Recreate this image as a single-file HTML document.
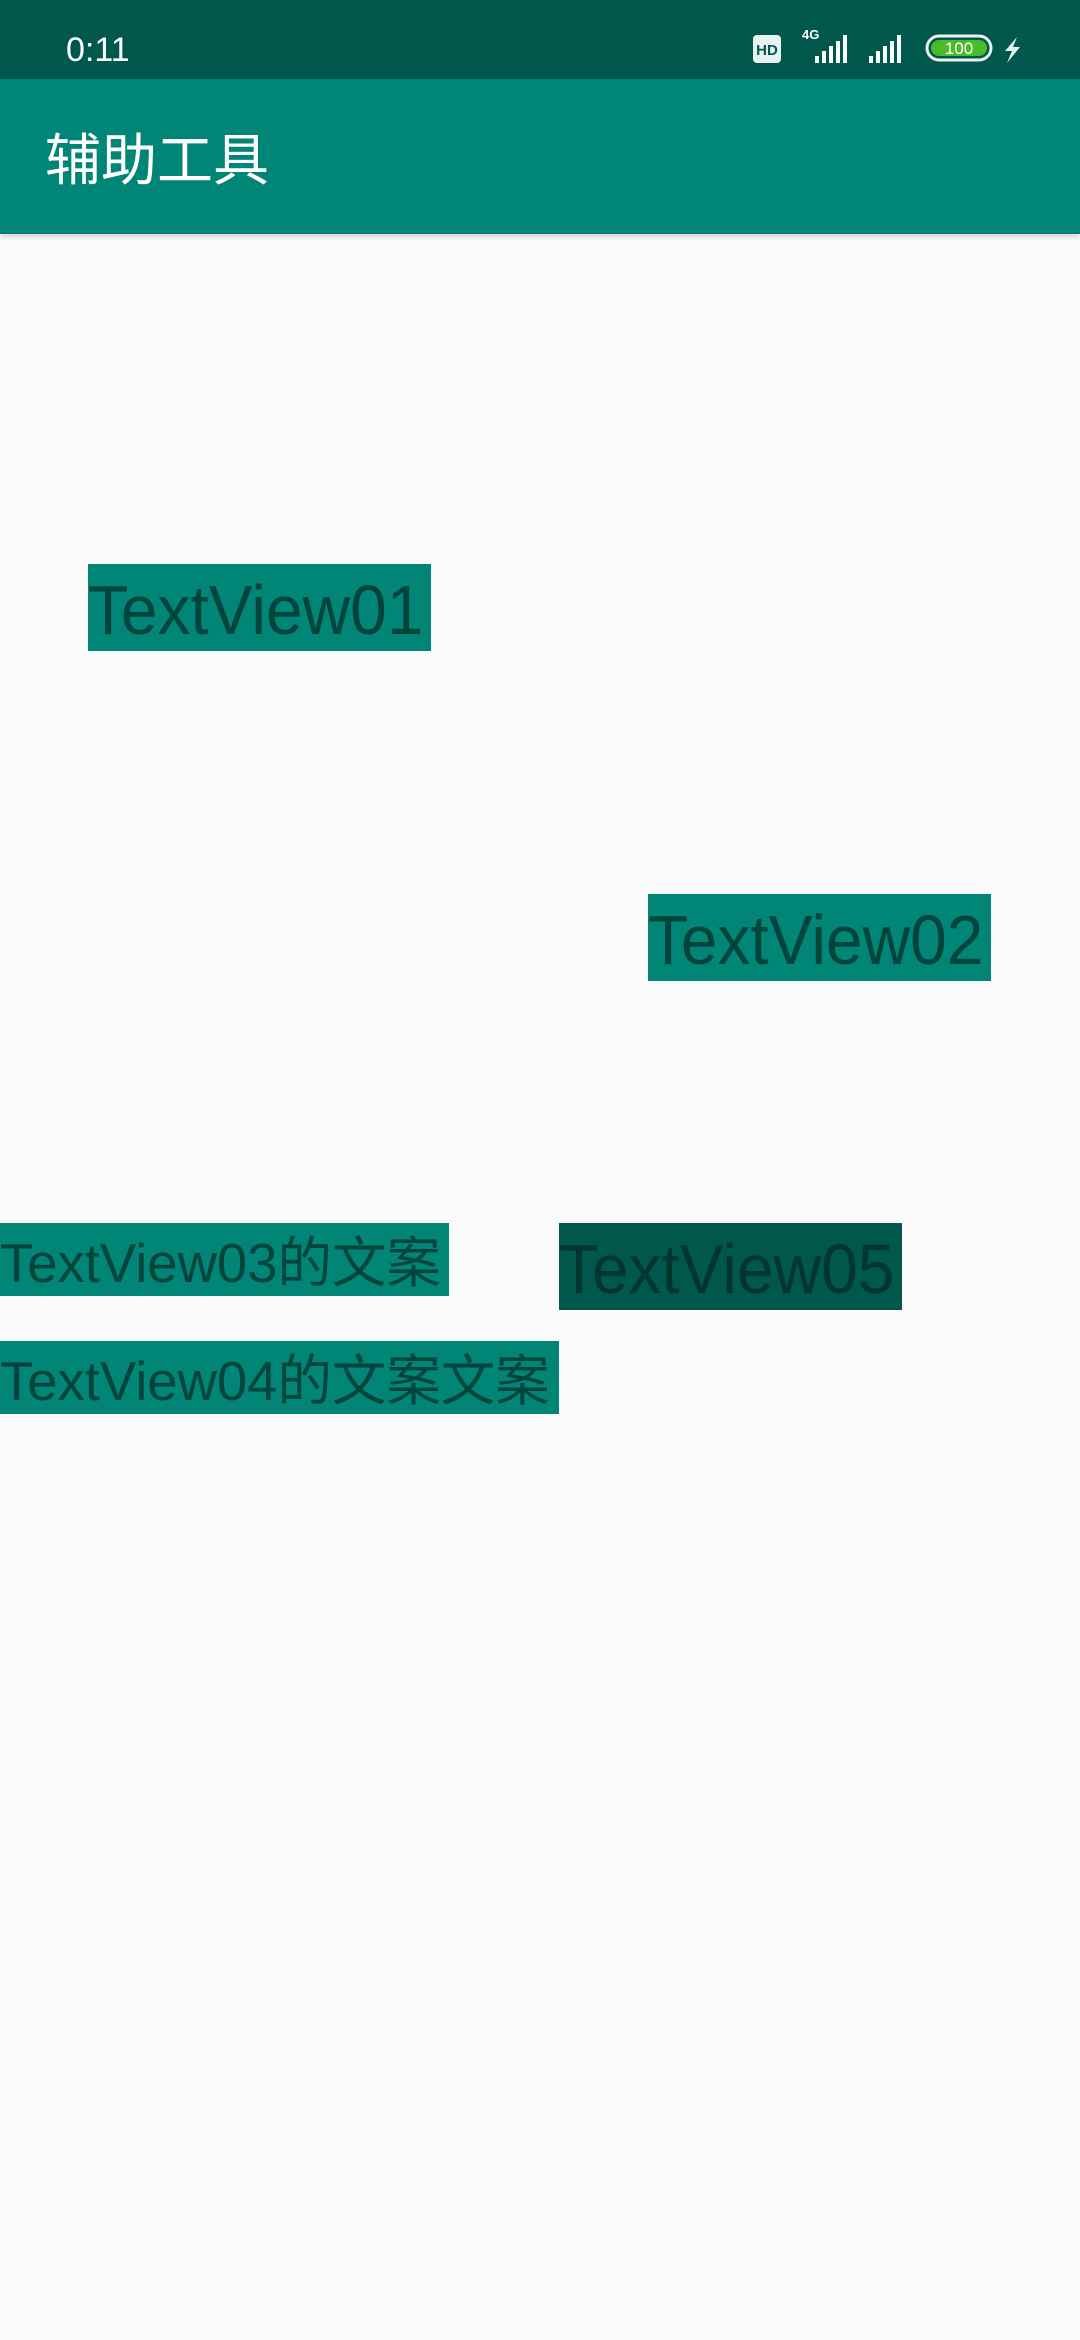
<!DOCTYPE html>
<html><head><meta charset="utf-8"><style>
*{margin:0;padding:0;box-sizing:border-box}
body{width:1080px;height:2340px;background:#fafafa;position:relative;overflow:hidden;font-family:"Liberation Sans","Noto Sans CJK SC",sans-serif}
.sb{position:absolute;left:0;top:0;width:1080px;height:79px;background:#00574b}
.tb{position:absolute;left:0;top:79px;width:1080px;height:155px;background:#008577;box-shadow:0 3px 5px rgba(0,0,0,.15)}
.box{position:absolute;background:#008577;color:#00453b;white-space:nowrap;overflow:hidden}
.box span{display:inline-block;transform-origin:0 0}
</style></head><body>
<div class="sb">
<div style="position:absolute;left:66px;top:31px;color:#fff;font-size:34px;">0:11</div>
<svg style="position:absolute;left:740px;top:20px" width="340" height="60" viewBox="0 0 340 60">
<rect x="13" y="15" width="28" height="28" rx="4" fill="#e8f2f0"/>
<text x="27" y="35" font-size="15" font-weight="bold" fill="#00574b" text-anchor="middle" font-family="Liberation Sans">HD</text>
<text x="62" y="19" font-size="13" font-weight="bold" fill="#fff" font-family="Liberation Sans">4G</text>
<g fill="#fff"><rect x="75" y="36" width="4" height="7"/><rect x="82" y="31" width="4" height="12"/><rect x="89" y="26" width="4" height="17"/><rect x="96" y="21" width="4" height="22"/><rect x="103" y="15" width="4" height="28"/>
<rect x="129" y="36" width="4" height="7"/><rect x="136" y="31" width="4" height="12"/><rect x="143" y="26" width="4" height="17"/><rect x="150" y="21" width="4" height="22"/><rect x="157" y="15" width="4" height="28"/></g>
<rect x="187" y="16" width="64" height="24" rx="12" fill="none" stroke="#e8f2f0" stroke-width="3"/>
<rect x="191" y="20" width="56" height="16" rx="8" fill="#4cbb2a"/>
<text x="219" y="34" font-size="17" fill="#fff" text-anchor="middle" font-family="Liberation Sans">100</text>
<path d="M277 17 L265 31 L272 31 L267 43 L280 27 L273 27 Z" fill="#e8f2f0"/>
</svg>
</div>
<div class="tb"><div style="position:absolute;left:45px;top:50px;color:#fff;font-size:56px;font-family:'Noto Sans CJK SC',sans-serif;line-height:1">辅助工具</div></div>

<div class="box" style="left:88px;top:564px;width:343px;height:87px;font-size:70px;line-height:87px;padding-top:3px"><span style="transform:scaleX(.94)">TextView01</span></div>
<div class="box" style="left:648px;top:894px;width:343px;height:87px;font-size:70px;line-height:87px;padding-top:3px"><span style="transform:scaleX(.94)">TextView02</span></div>
<div class="box" style="left:0;top:1223px;width:449px;height:73px;font-size:55px;line-height:73px;padding-top:4px"><span style="transform:scaleX(.99)">TextView03的文案</span></div>
<div class="box" style="left:559px;top:1223px;width:343px;height:87px;font-size:70px;line-height:87px;padding-top:3px;background:#00574b;color:#00362d"><span style="transform:scaleX(.94)">TextView05</span></div>
<div class="box" style="left:0;top:1341px;width:559px;height:73px;font-size:55px;line-height:73px;padding-top:4px"><span style="transform:scaleX(.99)">TextView04的文案文案</span></div>
</body></html>
